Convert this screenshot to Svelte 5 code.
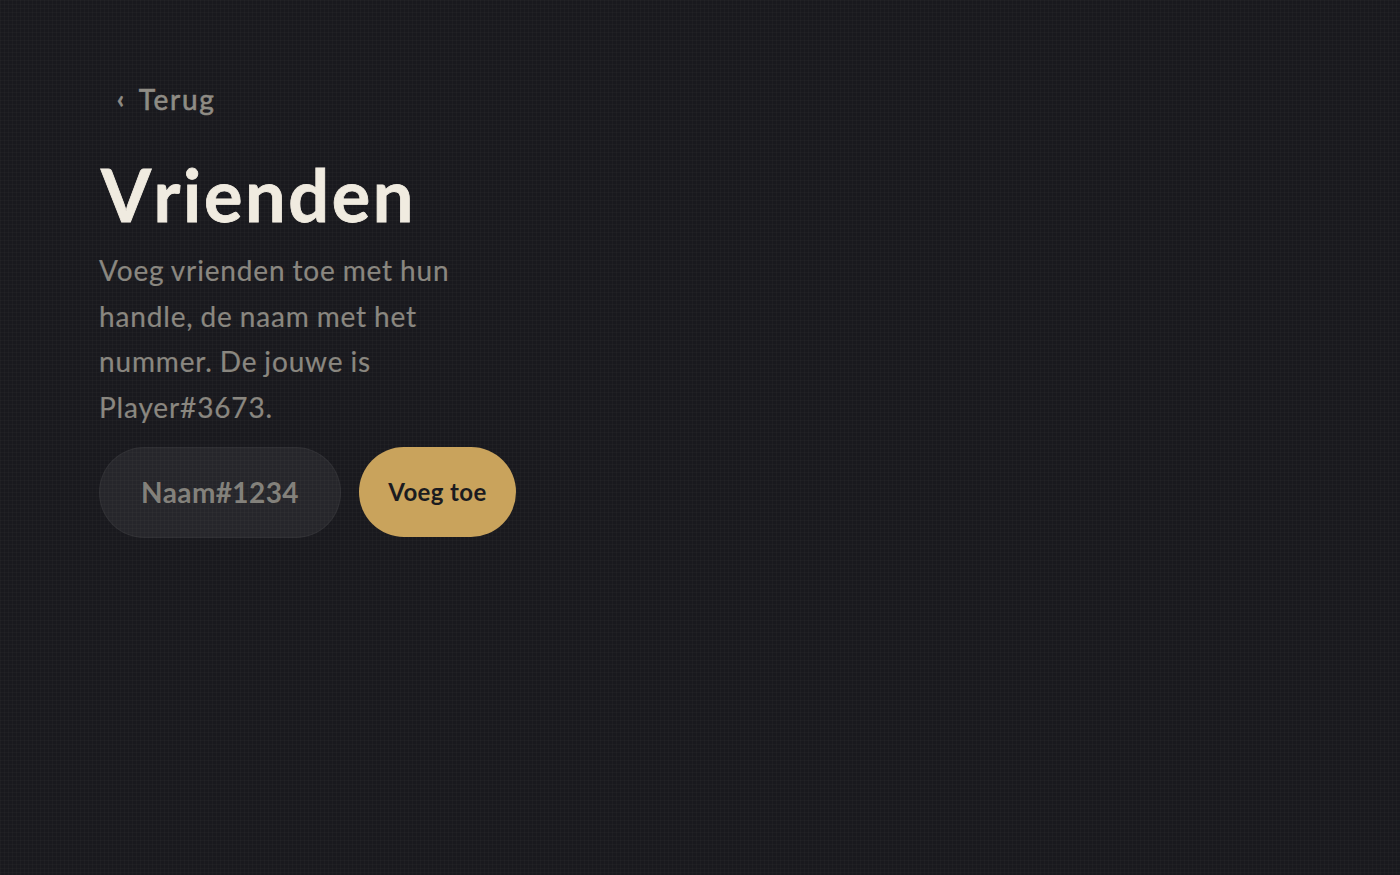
<script>
  let handle = $state("");
</script>

<main class="page">
  <a class="back" href="#terug"><span class="chev">‹</span> Terug</a>
  <h1>Vrienden</h1>
  <p class="intro">Voeg vrienden toe met hun handle, de naam met het nummer. De jouwe is Player#3673.</p>
  <form class="add" onsubmit={(e) => e.preventDefault()}>
    <input bind:value={handle} placeholder="Naam#1234" />
    <button type="submit">Voeg toe</button>
  </form>
</main>

<style>
  :global(body) {
    background-color: #19191e;
    background-image:
      linear-gradient(rgba(255, 255, 255, 0.018) 1px, transparent 1px),
      linear-gradient(90deg, rgba(255, 255, 255, 0.018) 1px, transparent 1px);
    background-size: 4px 4px;
    min-height: 875px;
  }
  .page {
    display: flex;
    flex-direction: column;
    align-items: flex-start;
    padding: 79px 99px;
    font-family: "Lato", "Open Sans", sans-serif;
  }
  .back {
    padding: 0 18px;
    font-size: 28px;
    line-height: 40px;
    letter-spacing: 1.7px;
    color: #8f8c85;
    -webkit-text-stroke: 0.6px #8f8c85;
    text-decoration: none;
  }
  .chev {
    margin-right: 5px;
    font-size: 24px;
    font-weight: 700;
    vertical-align: 2px;
  }
  h1 {
    margin: 30px 0 0 2px;
    font-size: 72px;
    line-height: 90px;
    font-weight: 700;
    font-kerning: none;
    letter-spacing: 2.6px;
    color: #f0ebe0;
    -webkit-text-stroke: 0.8px #f0ebe0;
  }
  .intro {
    margin: 9px 0 0;
    width: 380px;
    font-size: 28px;
    line-height: 45.7px;
    letter-spacing: 0.85px;
    word-spacing: -1px;
    color: #8a8780;
    -webkit-text-stroke: 0.2px #8a8780;
  }
  .add {
    display: flex;
    gap: 18px;
    margin-top: 16px;
  }
  input {
    box-sizing: border-box;
    width: 242px;
    height: 91px;
    border: 1px solid rgba(255, 255, 255, 0.04);
    border-radius: 46px;
    background: rgba(255, 255, 255, 0.06);
    font: 700 28px "Lato", sans-serif;
    letter-spacing: 0.4px;
    color: #f0ebe0;
    text-align: center;
    outline: none;
  }
  input::placeholder {
    color: #83817b;
    opacity: 1;
  }
  button {
    width: 157px;
    height: 90px;
    border: none;
    border-radius: 45px;
    background: #c9a35c;
    font: 700 24px "Lato", sans-serif;
    letter-spacing: 0.4px;
    color: #1b1b20;
  }
</style>
